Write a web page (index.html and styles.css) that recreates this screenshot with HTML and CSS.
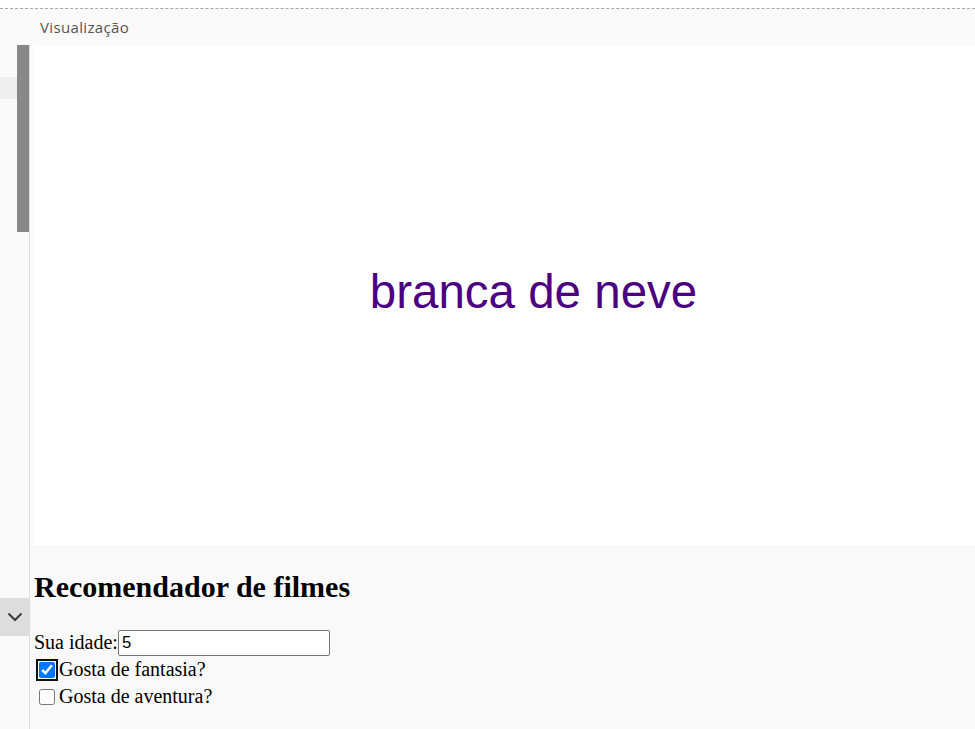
FILE: index.html
```html
<!DOCTYPE html>
<html lang="pt">
<head>
<meta charset="utf-8">
<title>Visualização</title>
<link rel="stylesheet" href="styles.css">
</head>
<body>
<div class="app">
  <div class="top-strip"></div>
  <div class="header"><span class="header-title">Visualização</span></div>
  <div class="workspace">
    <aside class="sidebar">
      <div class="sidebar-body">
        <div class="sidebar-list"><div class="sidebar-row"></div></div>
        <div class="sidebar-track"><div class="sidebar-thumb"></div></div>
      </div>
      <div class="sidebar-toggle">
        <svg width="16" height="10" viewBox="0 0 16 10"><path d="M1.5 1.5 L8 8 L14.5 1.5" fill="none" stroke="#3c3c3c" stroke-width="2"/></svg>
      </div>
      <div class="sidebar-rest"></div>
    </aside>
    <main class="main">
      <div class="preview-wrap">
        <div class="preview"><span class="movie">branca de neve</span></div>
      </div>
      <section class="form-area">
        <h2 class="title">Recomendador de filmes</h2>
        <div class="row">
          <label for="idade">Sua idade:</label><input id="idade" class="age" type="text" value="5">
        </div>
        <div class="row">
          <input type="checkbox" class="check check-focus" checked><span>Gosta de fantasia?</span>
        </div>
        <div class="row">
          <input type="checkbox" class="check"><span>Gosta de aventura?</span>
        </div>
      </section>
    </main>
  </div>
</div>
</body>
</html>
```
FILE: styles.css
```css
html, body {
  margin: 0;
  padding: 0;
  background: #ffffff;
  overflow: hidden;
}

.app {
  width: 975px;
  height: 729px;
  display: flex;
  flex-direction: column;
  overflow: hidden;
}

.top-strip {
  height: 8px;
  background: #ffffff;
}

.header {
  height: 36px;
  border-top: 1px dashed #a8a8a8;
  background: #fafafa;
  display: flex;
  align-items: center;
  padding-left: 40px;
}

.header-title {
  font-family: "Open Sans", "DejaVu Sans", sans-serif;
  font-size: 15px;
  letter-spacing: 0.35px;
  color: #555555;
}

.workspace {
  flex: 1;
  display: flex;
  min-height: 0;
}

.sidebar {
  width: 29px;
  border-right: 1px solid #dddddd;
  background: #fafafa;
  display: flex;
  flex-direction: column;
}

.sidebar-body {
  height: 553px;
  display: flex;
}

.sidebar-list {
  width: 17px;
}

.sidebar-row {
  margin-top: 32px;
  height: 22px;
  background: #efefef;
}

.sidebar-track {
  width: 12px;
}

.sidebar-thumb {
  height: 187px;
  background: #888888;
}

.sidebar-toggle {
  height: 38px;
  background: #dddddd;
  display: flex;
  align-items: center;
  justify-content: center;
}

.sidebar-rest {
  flex: 1;
}

.main {
  flex: 1;
  display: flex;
  flex-direction: column;
  overflow: hidden;
  min-width: 0;
}

.preview-wrap {
  height: 500px;
  padding-left: 4px;
  background: #fcfcfc;
  display: flex;
}

.preview {
  flex: none;
  width: 999px;
  background: #ffffff;
  display: flex;
  align-items: center;
  justify-content: center;
}

.movie {
  font-family: "Liberation Sans", Arial, sans-serif;
  font-size: 47.5px;
  color: #4b0082;
  margin-bottom: 8px;
}

.form-area {
  flex: 1;
  background: #f9f9f9;
  padding: 25px 0 0 4px;
  font-family: "Liberation Serif", "Times New Roman", serif;
  font-size: 20px;
  color: #000000;
}

.title {
  margin: 0 0 25px;
  font-size: 30px;
  font-weight: bold;
  line-height: 34px;
}

.row {
  display: flex;
  align-items: center;
  height: 27px;
}

.age {
  box-sizing: border-box;
  width: 212px;
  height: 26px;
  margin: 0;
  padding: 1px 3px;
  border: 1px solid #767676;
  border-radius: 2px;
  font-family: "Liberation Sans", Arial, sans-serif;
  font-size: 16.7px;
  color: #000000;
  background: #ffffff;
}

.check {
  width: 16px;
  height: 16px;
  margin: 0 4px 0 5px;
  accent-color: #0075ff;
}

.check-focus {
  outline: 2px solid #101010;
  outline-offset: 1px;
  border-radius: 3px;
}
```
